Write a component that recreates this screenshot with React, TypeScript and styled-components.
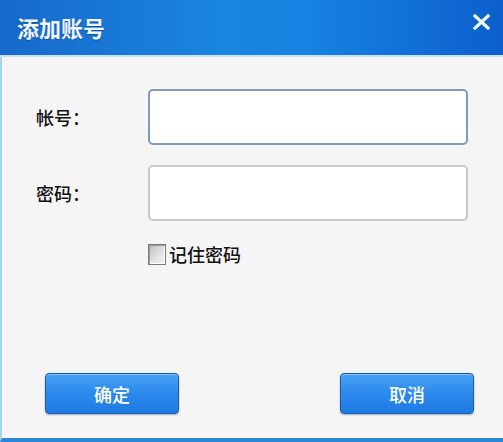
import React from 'react';
import styled, { createGlobalStyle } from 'styled-components';

const GlobalStyle = createGlobalStyle`
  html, body {
    margin: 0;
    padding: 0;
    background: #f4f4f4;
  }
  * {
    box-sizing: border-box;
  }
`;

const Window = styled.div`
  width: 503px;
  height: 442px;
  display: flex;
  flex-direction: column;
  font-family: "Noto Sans CJK SC", "Noto Sans", sans-serif;
  overflow: hidden;
`;

const TitleBar = styled.div`
  height: 57px;
  flex-shrink: 0;
  display: flex;
  align-items: center;
  justify-content: space-between;
  padding: 0 13px 2px 17px;
  background: linear-gradient(90deg, #1769cc 0%, #1a86e0 45%, #1683e2 60%, #0d5fcb 100%);
  border-bottom: 2px solid #c9e2f5;
`;

const Title = styled.h1`
  margin: 0;
  font-size: 22px;
  font-weight: 600;
  color: #eef6ff;
  text-shadow: 0 1px 1px rgba(0, 40, 100, 0.45);
`;

const CloseButton = styled.button`
  width: 18px;
  height: 18px;
  padding: 0;
  margin-top: -10px;
  border: none;
  background: transparent;
  display: flex;
  align-items: center;
  justify-content: center;
  cursor: pointer;
`;

const Body = styled.div`
  flex: 1;
  display: flex;
  flex-direction: column;
  background: #f5f5f5;
  border-left: 2px solid #a6d3ef;
  border-bottom: 4px solid #2b86d6;
  padding: 32px 29px 24px 34px;
`;

const Form = styled.div`
  display: grid;
  grid-template-columns: 112px 320px;
  row-gap: 20px;
  align-items: center;
`;

const Label = styled.label`
  font-size: 18px;
  font-weight: 500;
  color: #111111;
`;

const Input = styled.input<{ $focused?: boolean }>`
  width: 320px;
  height: 56px;
  border-radius: 5px;
  border: 2px solid ${(p) => (p.$focused ? '#7d9dc0' : '#c9c9c9')};
  background: #ffffff;
  outline: none;
  font-size: 16px;
  padding: 0 10px;
`;

const CheckRow = styled.label`
  grid-column: 2;
  display: flex;
  align-items: center;
  gap: 3px;
  font-size: 18px;
  font-weight: 500;
  color: #111111;
`;

const CheckBox = styled.span`
  width: 18px;
  height: 21px;
  border: 1px solid #7a7a7a;
  background: linear-gradient(135deg, #bdbdbd 0%, #e4e4e4 60%, #f2f2f2 100%);
  box-shadow: inset 1px 1px 0 #9a9a9a, inset -1px -1px 0 #ffffff;
`;

const Actions = styled.div`
  margin-top: auto;
  display: flex;
  justify-content: space-between;
  padding-left: 9px;
`;

const Button = styled.button`
  width: 134px;
  height: 41px;
  border: 1px solid #1d5aa6;
  border-radius: 4px;
  background: linear-gradient(180deg, #47a1f3 0%, #2c89ec 50%, #1e7ae4 100%);
  box-shadow: 0 1px 2px rgba(0, 40, 100, 0.35), inset 0 1px 0 rgba(255, 255, 255, 0.35);
  color: #ffffff;
  font-family: "Noto Sans CJK SC", "Noto Sans", sans-serif;
  font-size: 18px;
  font-weight: 500;
  cursor: pointer;
`;

const App: React.FC = () => {
  return (
    <>
      <GlobalStyle />
      <Window>
        <TitleBar>
          <Title>添加账号</Title>
          <CloseButton aria-label="关闭">
            <svg width="17" height="16" viewBox="0 0 17 16">
              <path d="M2 2 L15 14 M15 2 L2 14" stroke="#f2f8ff" strokeWidth="3.2" strokeLinecap="square" />
            </svg>
          </CloseButton>
        </TitleBar>
        <Body>
          <Form>
            <Label>帐号：</Label>
            <Input $focused />
            <Label>密码：</Label>
            <Input type="password" />
            <CheckRow>
              <CheckBox />
              记住密码
            </CheckRow>
          </Form>
          <Actions>
            <Button>确定</Button>
            <Button>取消</Button>
          </Actions>
        </Body>
      </Window>
    </>
  );
};

export default App;
